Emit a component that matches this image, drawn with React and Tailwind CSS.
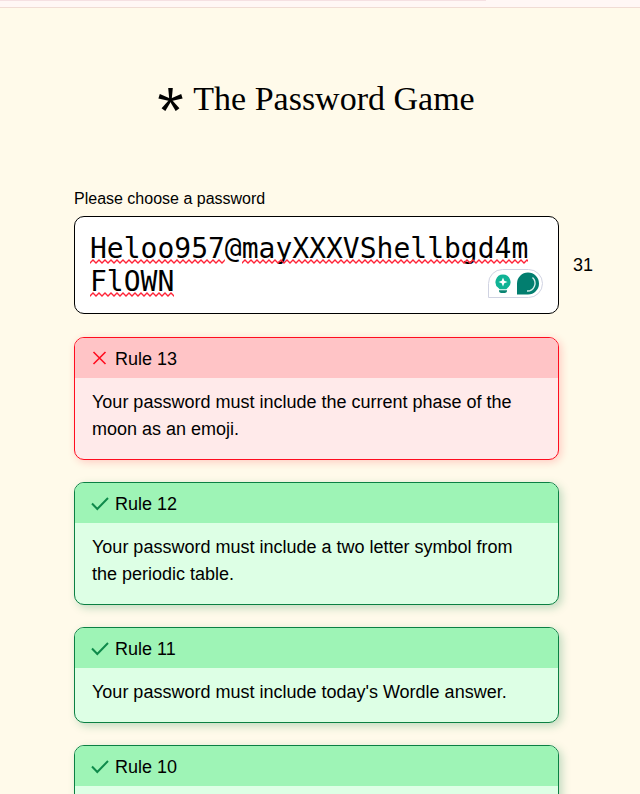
import React, { useState } from "react";

const rules = [
  { number: 13, valid: false, text: "Your password must include the current phase of the moon as an emoji." },
  { number: 12, valid: true, text: "Your password must include a two letter symbol from the periodic table." },
  { number: 11, valid: true, text: "Your password must include today's Wordle answer." },
  { number: 10, valid: true, text: "" },
];

const Squiggle = ({ className }) => (
  <svg className={className} height="5" aria-hidden="true">
    <defs>
      <pattern id="squiggle" width="6" height="5" patternUnits="userSpaceOnUse">
        <path d="M-3 1 L0 4 L3 1 L6 4 L9 1" fill="none" stroke="#ff2438" strokeWidth="1.4" />
      </pattern>
    </defs>
    <rect width="100%" height="5" fill="url(#squiggle)" />
  </svg>
);

const Star = () => (
  <svg width="25" height="24" viewBox="0 0 25 24" aria-hidden="true">
    {[0, 72, 144, 216, 288].map((angle) => (
      <path key={angle} d="M11.4 13.5 L10.2 1 H14.8 L13.6 13.5 Z" transform={`rotate(${angle} 12.5 13)`} />
    ))}
  </svg>
);

// Writing assistant badge in the corner of the text box
const AssistantBadge = () => (
  <svg className="absolute right-4 bottom-4" width="55" height="29" viewBox="0 0 55 29" aria-hidden="true">
    <path d="M0.5 28.5 V14.5 A14 14 0 0 1 14.5 0.5 H40.5 A14 14 0 0 1 40.5 28.5 Z" fill="#fff" stroke="#d0d3e2" />
    <path d="M15 5.5 A7.5 7.5 0 0 1 19.5 19 L18.3 20.3 H11.7 L10.5 19 A7.5 7.5 0 0 1 15 5.5 Z" fill="#10b395" />
    <path d="M15 8.5 L16.3 11.7 L19.5 13 L16.3 14.3 L15 17.5 L13.7 14.3 L10.5 13 L13.7 11.7 Z" fill="#fff" />
    <path d="M11 21.3 H19 V22 A3 2 0 0 1 17 24 H13 A3 2 0 0 1 11 22 Z" fill="#0b8573" />
    <path d="M29 25.5 V14.5 A11 11 0 1 1 40 25.5 Z" fill="#027e6f" />
    <path d="M44.5 8.5 A7.8 7.8 0 0 1 39 22" fill="none" stroke="#d5efea" strokeWidth="1.4" />
  </svg>
);

const Rule = ({ number, valid, text }) => (
  <li
    className={`overflow-hidden rounded-[10px] border text-lg/[27px] ${
      valid
        ? "border-[#0b8043] bg-[#ddffe5] shadow-[3px_3px_8px_#0b804340]"
        : "border-[#ff0d1f] bg-[#ffeaea] shadow-[2px_2px_8px_#ff0d1f33]"
    }`}
  >
    <h2 className={`flex h-10 items-center gap-1.5 px-4 pt-0.5 ${valid ? "bg-[#9ef4b6]" : "bg-[#ffc4c6]"}`}>
      {valid ? (
        <svg width="18" height="16" viewBox="0 0 18 16" fill="none" stroke="#0f8a4b" strokeWidth="2" aria-hidden="true">
          <path d="M1 7.5 L6.3 13 L17 2" />
        </svg>
      ) : (
        <svg width="18" height="16" viewBox="0 0 18 16" fill="none" stroke="#ff0d1f" strokeWidth="1.6" aria-hidden="true">
          <path d="M2.5 1 L14.5 13 M14.5 1 L2.5 13" />
        </svg>
      )}
      Rule {number}
    </h2>
    <p className="min-h-[53px] pt-[11px] pr-8 pb-4 pl-[17px]">{text}</p>
  </li>
);

const App = () => {
  const [password, setPassword] = useState("Heloo957@mayXXXVShellbgd4mFlOWN");

  return (
    <div className="h-screen overflow-y-auto bg-[#fffaea] font-['Liberation_Sans',Arial,sans-serif] text-black [scrollbar-width:none]">
      <div className="h-2 border-b border-[#f0dcd4] bg-[#fff7f5]">
        <div className="h-px w-[76%] bg-[#f5e0e2]" />
      </div>

      <main className="pb-12 pl-[74px]">
        <header className="mr-[81px] flex items-center justify-center gap-2.5 pt-[71px]">
          <Star />
          <h1 className="font-['Liberation_Serif',serif] text-[34px]/[40px]">The Password Game</h1>
        </header>

        <label htmlFor="password" className="mt-[70px] block text-base/[20px]">
          Please choose a password
        </label>
        <div className="mt-[7px] flex items-center">
          <div className="relative flex-1">
            <textarea
              id="password"
              rows={2}
              spellCheck={false}
              value={password}
              onChange={(e) => setPassword(e.target.value)}
              className="block w-full resize-none overflow-hidden rounded-[10px] border border-black bg-white p-[15px] font-['DejaVu_Sans_Mono',monospace] text-[28px]/[33px] break-all outline-none"
            />
            {/* Spelling marks */}
            <div className="pointer-events-none absolute inset-x-4 top-[43px] flex flex-col gap-7 font-['DejaVu_Sans_Mono',monospace] text-[28px]">
              <div className="flex gap-[1ch]">
                <Squiggle className="w-[8ch]" />
                <Squiggle className="w-[17ch]" />
              </div>
              <Squiggle className="w-[5ch]" />
            </div>
            <AssistantBadge />
          </div>
          <output htmlFor="password" className="w-[81px] pl-3.5 text-lg">
            {password.length}
          </output>
        </div>

        <ul className="mt-[23px] mr-[81px] flex flex-col gap-[22px]">
          {rules.map((rule) => (
            <Rule key={rule.number} {...rule} />
          ))}
        </ul>
      </main>
    </div>
  );
};

export default App;
